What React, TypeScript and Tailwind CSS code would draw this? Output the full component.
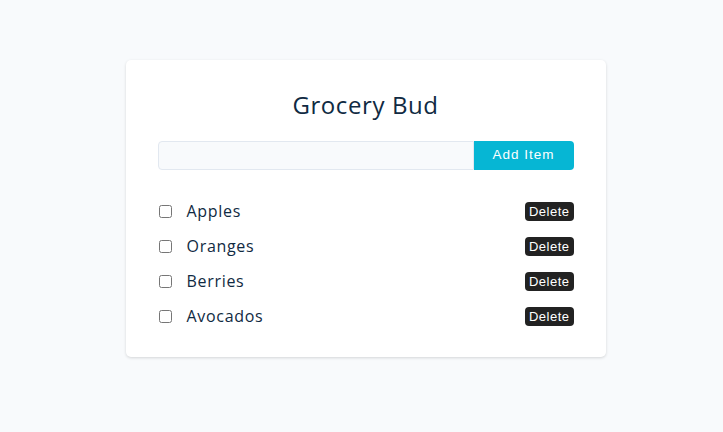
import { useState } from "react";

const initial = [
  { id: 1, name: "Apples", done: false },
  { id: 2, name: "Oranges", done: false },
  { id: 3, name: "Berries", done: false },
  { id: 4, name: "Avocados", done: false },
];

const App = () => {
  const [items, setItems] = useState(initial);
  const [name, setName] = useState("");

  const addItem = () => {
    if (!name.trim()) return;
    setItems([...items, { id: Date.now(), name, done: false }]);
    setName("");
  };

  return (
    <div className="min-h-[432px] bg-[#f8fafc] pt-[60px] pl-2 font-['Open_Sans',sans-serif]">
      <div className="mx-auto w-[480px] rounded-[5px] bg-white px-8 pt-[30px] pb-[29px] shadow-[0_1px_3px_rgba(0,0,0,0.15)]">
        <h4 className="text-center text-[24px] leading-[30px] tracking-[0.6px] text-[#102a42]">Grocery Bud</h4>
        <div className="mt-[21px] flex h-[29px]">
          <input
            className="flex-1 rounded-l-[4px] border border-[#e2e8f0] bg-[#f8fafc] px-2 text-sm outline-none"
            value={name}
            onChange={(e) => setName(e.target.value)}
          />
          <button
            className="w-[100px] rounded-r-[4px] bg-[#06b6d4] font-['Liberation_Sans',sans-serif] text-[13.5px] tracking-[1px] text-white"
            onClick={addItem}
          >
            Add Item
          </button>
        </div>
        <div className="mt-[29px] flex flex-col gap-[11px]">
          {items.map((item) => (
            <div key={item.id} className="flex h-[24px] items-center">
              <input
                type="checkbox"
                className="ml-px h-[13px] w-[13px]"
                checked={item.done}
                onChange={() => setItems(items.map((i) => (i.id === item.id ? { ...i, done: !i.done } : i)))}
              />
              <p className="ml-[15px] flex-1 text-[16px] tracking-[0.7px] text-[#102a42]">{item.name}</p>
              <button
                className="rounded-[4px] bg-[#222] px-[4px] py-[1px] font-['Liberation_Sans',sans-serif] text-[13px] leading-[17px] tracking-[0.5px] text-white"
                onClick={() => setItems(items.filter((i) => i.id !== item.id))}
              >
                Delete
              </button>
            </div>
          ))}
        </div>
      </div>
    </div>
  );
};

export default App;
